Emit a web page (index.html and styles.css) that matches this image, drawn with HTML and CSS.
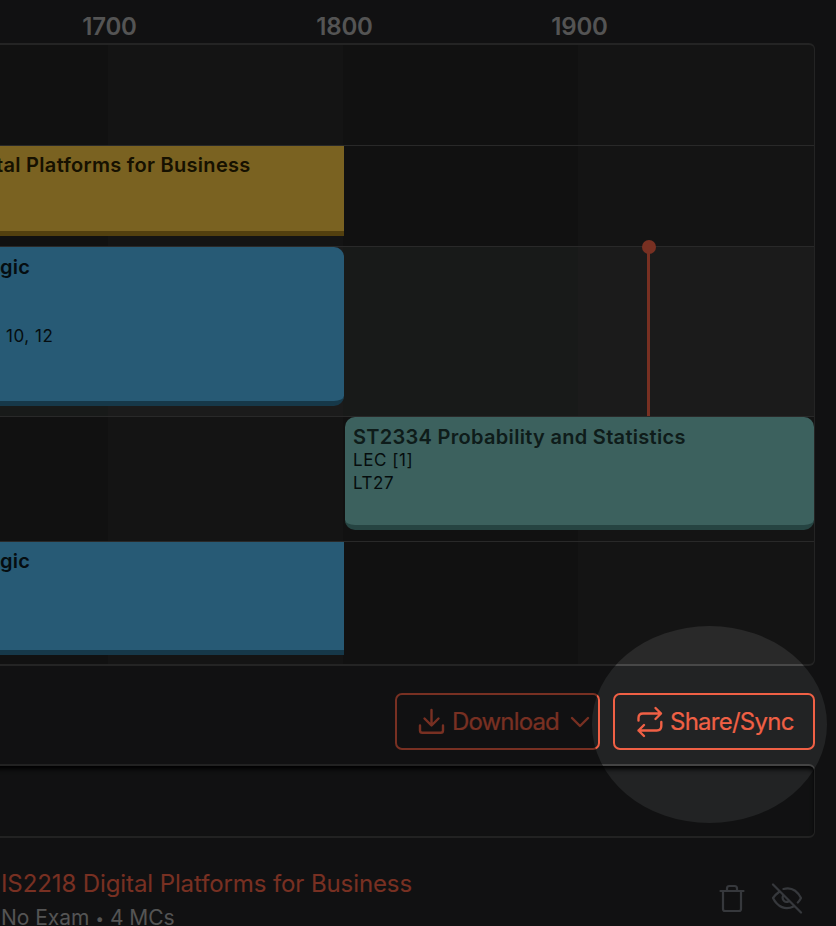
FILE: index.html
```html
<!DOCTYPE html>
<html lang="en">
<head>
<meta charset="utf-8">
<title>Timetable</title>
<link rel="stylesheet" href="styles.css">
</head>
<body>
<main class="page">
  <header class="hours"><span>1700</span><span>1800</span><span>1900</span></header>
  <section class="timetable">
    <div class="day"></div>
    <div class="day">
      <article class="lesson gold"><h3 class="cut">tal Platforms for Business</h3></article>
    </div>
    <div class="day today">
      <article class="lesson blue rounded"><h3>gic</h3><p class="weeks">10, 12</p></article>
      <i class="now"></i>
    </div>
    <div class="day">
      <article class="lesson teal"><h3>ST2334 Probability and Statistics</h3><p>LEC [1]</p><p>LT27</p></article>
    </div>
    <div class="day">
      <article class="lesson blue"><h3>gic</h3></article>
    </div>
  </section>
  <div class="actions">
    <button class="btn download">
      <svg width="28" height="28" viewBox="0 0 28 28"><path d="M13.5 2v15M6.500 10.500l7 7 7-7M2 17.500v5q0 2.300 2.300 2.300h18.400q2.300 0 2.300-2.300v-5"/></svg>
      <span>Download</span>
      <svg class="chevron" width="20" height="12" viewBox="0 0 20 12"><path d="M2 2l8 8 8-8"/></svg>
    </button>
    <button class="btn share">
      <svg width="28" height="32" viewBox="0 0 28 32"><path d="M2.500 14.500v-2.500q0-4.500 4.500-4.500h18M19.500 2l5.500 5.500-5.500 5.500M25.300 16v4q0 4.500-4.500 4.500H2.500M8 19L2.500 24.500l5.500 5.500"/></svg>
      <span>Share/Sync</span>
    </button>
  </div>
  <section class="search"></section>
  <section class="module">
    <div class="info"><a>IS2218 Digital Platforms for Business</a><p>No Exam <i class="dot">•</i> 4 MCs</p></div>
    <div class="tools">
      <svg width="26" height="30" viewBox="0 0 26 30"><path d="M1.500 7h23M4 7v18q0 2 2 2h14q2 0 2-2v-18M8 7v-2.500q0-2.500 2.500-2.500h5q2.500 0 2.500 2.500v2.500"/></svg>
      <svg width="32" height="32" viewBox="0 0 32 32"><path d="M2 1.500l28 28M12.500 6C20 4 26 7.500 30 15q-1.300 2.600-3.200 4.500M8 9Q4.500 11.500 2 15C6.500 24 14.500 27.500 22.500 23.500M12 13c-1.500 3.500 2 7.200 5.500 5.500"/></svg>
    </div>
  </section>
  <svg class="spotlight" viewBox="0 0 836 926"><path fill-rule="evenodd" d="M0 0H836V926H0ZM592 724.500a117.500 98.500 0 1 0 235 0a117.500 98.500 0 1 0-235 0Z"/></svg>
</main>
</body>
</html>
```

FILE: styles.css
```css
* { box-sizing: border-box; }
body { margin: 0; background: #222324; font-family: Inter, "Liberation Sans", sans-serif; }
h3, p { margin: 0; }
.page { position: relative; width: 836px; height: 926px; overflow: hidden; }
.hours { display: flex; height: 43px; margin-left: -8px; }
.hours span { flex: 0 0 235px; text-align: center; font-size: 24px; font-weight: 600; line-height: 53px; letter-spacing: -.2px; color: #a8a8a8; }
.timetable {
  width: 823px; height: 623px; margin-left: -8px; padding-left: 8px;
  border: 1px solid #484848; border-top-width: 2px; border-bottom-width: 2px; border-left: 0;
  border-radius: 0 6px 6px 0;
  background: linear-gradient(90deg, #222 116px, #292929 116px 351px, #222 351px 586px, #292929 586px);
}
.day { position: relative; height: 101px; border-bottom: 1px solid #525252; }
.day:nth-child(3) { height: 170px; }
.day:nth-child(4) { height: 125px; }
.day:nth-child(5) { height: 120px; border-bottom: 0; }
.today { background: linear-gradient(90deg, #303433 108px, #373737 108px 343px, #303433 343px 578px, #373737 578px); }
.lesson { width: 344px; height: 90px; padding: 7px 8px 0 0; }
.lesson h3 { font-size: 20px; font-weight: 600; line-height: 25px; letter-spacing: .3px; white-space: nowrap; }
.lesson p { font-size: 17px; line-height: 23px; letter-spacing: .55px; }
.gold { background: #f4c442; color: #2c2200; border-bottom: 5px solid #a6801e; }
.gold .cut { text-indent: -4px; }
.blue { height: 113px; background: #4eb4ea; color: #0b1a22; border-bottom: 5px solid #2c7092; }
.rounded { height: 159px; padding-top: 8px; border-radius: 0 10px 10px 0; }
.weeks { padding: 45px 0 0 6px; }
.teal { width: 469px; height: 113px; margin-left: 345px; padding: 8px 8px 0; background: #78c2bc; color: #0b1a1a; border-bottom: 5px solid #4c8884; border-radius: 10px; }
.teal h3 { color: #1c3835; line-height: 24px; }
.now { position: absolute; left: 647px; top: 0; width: 3px; height: 169px; background: #f06045; }
.now::before { content: ""; position: absolute; left: -5.500px; top: -7px; width: 14px; height: 14px; border-radius: 50%; background: #f06045; }
.actions { display: flex; justify-content: flex-end; gap: 13px; padding: 27px 21px 0 0; height: 98px; }
.btn { display: flex; align-items: center; height: 57px; padding: 0; border: 2px solid #f06045; border-radius: 7px; background: none; color: #f06045; font: 400 24px/28px Inter, "Liberation Sans", sans-serif; letter-spacing: -.75px; -webkit-text-stroke: .2px; white-space: nowrap; }
.btn svg, .tools svg { flex: none; fill: none; stroke: currentColor; stroke-width: 2.4; stroke-linecap: round; stroke-linejoin: round; }
.tools svg { stroke-width: 2.2; }
.download { width: 205px; padding-left: 21px; }
.download span { margin-left: 6px; letter-spacing: -.85px; }
.download .chevron { margin-left: 11px; }
.share { width: 202px; padding-left: 21px; }
.share span { margin-left: 6px; }
.search { width: 823px; height: 74px; margin-left: -8px; border: 2px solid #444; border-right-width: 1px; border-radius: 6px; box-shadow: inset 0 4px 5px -1px #000; }
.module { display: flex; justify-content: space-between; padding: 30px 33px 0 1px; }
.info { font-size: 21px; color: #a8a8a8; white-space: nowrap; }
.info p { line-height: 28px; padding-top: 4px; letter-spacing: -.05px; }
.dot { display: inline-block; width: 9px; font-size: 15px; font-style: normal; line-height: 20px; text-align: center; vertical-align: 1px; }
.info a { display: block; font-size: 24px; line-height: 32px; letter-spacing: -.1px; color: #f06045; }
.tools { display: flex; align-items: center; gap: 26px; height: 62px; color: #6d7178; }
.spotlight { position: absolute; left: 0; top: 0; width: 836px; height: 926px; fill: #000; fill-opacity: .5; pointer-events: none; }
```
